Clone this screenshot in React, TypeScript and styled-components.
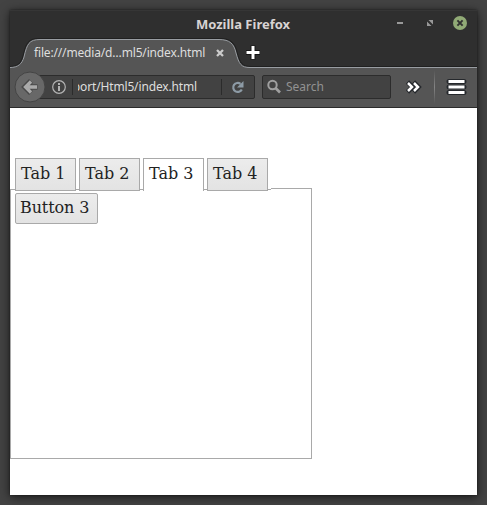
import React from "react";
import styled, { createGlobalStyle } from "styled-components";

const GlobalStyle = createGlobalStyle`
  *, *::before, *::after { box-sizing: border-box; }
  html, body { margin: 0; height: 100%; overflow: hidden; background: #434343; }
  svg { display: block; flex: none; }
`;

const Desktop = styled.div`
  height: 505px;
  padding: 10px;
  background: #434343;
`;

const Window = styled.main`
  display: flex;
  flex-direction: column;
  width: 467px;
  height: 485px;
  background: #fff;
  font: 12px/16px "Noto Sans", sans-serif;
  box-shadow: 0 2px 10px rgba(0, 0, 0, 0.65), 0 0 2px #252525;
`;

const TitleBar = styled.header`
  display: grid;
  grid-template-columns: 1fr auto 1fr;
  align-items: center;
  height: 28px;
  background: #2f2f2f;
  border-top: 1px solid #363636;
`;

const Title = styled.h1`
  grid-column: 2;
  margin: -2px 1px 0 0;
  color: #d8d3d3;
  font-size: 13px;
  font-weight: 700;
  line-height: 18px;
`;

const WindowControls = styled.div`
  display: flex;
  justify-content: flex-end;
  padding-right: 2px;
  margin-top: -3px;
`;

const TabStrip = styled.nav`
  display: flex;
  height: 30px;
  background: #2f2f2f;
`;

const BrowserTab = styled.div`
  position: relative;
  display: flex;
  align-items: center;
  width: 236px;
  height: 30px;
  padding: 0 0 1px 24px;
  color: #dedede;
`;

const TabShape = styled.svg`
  position: absolute;
  left: 0;
  top: 0;
`;

const TabLabel = styled.span`
  position: relative;
  width: 182px;
  white-space: nowrap;
  letter-spacing: -0.16px;
`;

const TabClose = styled.svg`
  position: relative;
`;

const NewTab = styled.svg`
  position: relative;
`;

const Toolbar = styled.div`
  display: flex;
  align-items: center;
  height: 40px;
  padding: 0 0 2px 4px;
  background: #555;
  border-bottom: 1px solid #2b2b2b;
`;

const BackButton = styled.svg`
  position: relative;
  z-index: 1;
`;

const Field = styled.div<{ $width: number }>`
  display: flex;
  align-items: center;
  width: ${(p) => p.$width}px;
  height: 24px;
  background: #424242;
  border: 1px solid #2c2c2c;
  border-radius: 2px;
  color: #dedede;
`;

const AddressField = styled(Field)`
  margin-left: -8px;
  padding-left: 13px;
`;

const SearchField = styled(Field)`
  margin-left: 7px;
  padding-left: 4px;
  gap: 4px;
  color: #929292;
`;

const Divider = styled.span<{ $tall?: boolean }>`
  width: 1px;
  height: ${(p) => (p.$tall ? 34 : 16)}px;
  background: ${(p) => (p.$tall ? "linear-gradient(#555, #858585 50%, #555)" : "#2b2b2b")};
`;

const AddressDivider = styled(Divider)`
  margin-left: 6px;
`;

const Address = styled.div`
  display: flex;
  justify-content: flex-end;
  width: 119px;
  margin-left: 5px;
  margin-right: 24px;
  overflow: hidden;
  white-space: nowrap;
  letter-spacing: -0.15px;
`;

const Page = styled.section`
  flex: 1;
  padding-top: 50px;
  color: #222;
  font: 16px/19px "DejaVu Serif", serif;
`;

const PageTabs = styled.div`
  position: relative;
  z-index: 1;
  display: flex;
  height: 33px;
  width: 261px;
`;

const Gap = styled.span<{ $width: number }>`
  width: ${(p) => p.$width}px;
  height: 32px;
  background: #fff;
  border-bottom: 1px solid #a9a9a9;
`;

const PageTab = styled.div<{ $active?: boolean }>`
  width: 61px;
  height: 33px;
  padding: 5px 0 0 5px;
  border: 1px solid #a9a9a9;
  border-bottom-width: ${(p) => (p.$active ? 0 : 1)}px;
  background: ${(p) => (p.$active ? "#fff" : "linear-gradient(#ececec, #e3e3e3)")};
  white-space: nowrap;
`;

const Panel = styled.div`
  width: 302px;
  height: 271px;
  margin-top: -3px;
  padding: 4px;
  border: 1px solid #a9a9a9;
`;

const PageButton = styled.button`
  display: block;
  width: 83px;
  height: 31px;
  padding: 0 0 3px 4px;
  border: 1px solid #a9a9a9;
  border-radius: 2px;
  background: linear-gradient(#ececec, #e3e3e3);
  color: #222;
  font: inherit;
  letter-spacing: -0.1px;
  text-align: left;
  white-space: nowrap;
`;

const Minimize = () => (
  <svg width="30" height="16"><path d="M12 8h6" stroke="#999" strokeWidth="2" /></svg>
);
const Restore = () => (
  <svg width="30" height="16"><path d="M13.5 5H18v4.500zM12 6.500V11h4.500z" fill="#999" /></svg>
);
const Close = () => (
  <svg width="30" height="16">
    <circle cx="15" cy="8" r="7" fill="#91aa76" />
    <path d="m12.4 5.4 5.2 5.2m0-5.2-5.2 5.2" stroke="#303030" strokeWidth="1.9" />
  </svg>
);
const Reload = () => (
  <svg width="32" height="16">
    <path d="M19.8 10.4A4.500 4.500 0 1 1 18.500 4.900" fill="none" stroke="#8d9ba6" strokeWidth="2.2" />
    <path d="M21.500 2v6.500H15z" fill="#8d9ba6" />
  </svg>
);

const pageTabs = ["Tab 1", "Tab 2", "Tab 3", "Tab 4"];

export default function App() {
  return (
    <>
      <GlobalStyle />
      <Desktop>
        <Window>
          <TitleBar>
            <Title>Mozilla Firefox</Title>
            <WindowControls><Minimize /><Restore /><Close /></WindowControls>
          </TitleBar>
          <TabStrip>
            <BrowserTab>
              <TabShape width="467" height="30">
                <path d="M0 29.5C8 29.5 12 26 14 19C17 6 19 1.5 30 1.5H209C220 1.5 224 6 226 15C229 26 231 29.5 240 29.5H467V30H0Z" fill="#555" />
                <path d="M0 28.5C8 28.5 11 25 13 18C16 5 18 .5 29 .5H210C221 .5 225 5 227 14C230 25 232 28.5 241 28.5H467" fill="none" stroke="#202020" />
                <path d="M0 29.5C8 29.5 12 26 14 19C17 6 19 1.5 30 1.5H209C220 1.5 224 6 226 15C229 26 231 29.5 240 29.5H467" fill="none" stroke="#999da2" />
              </TabShape>
              <TabLabel>file:///media/d…ml5/index.html</TabLabel>
              <TabClose width="8" height="8"><path d="m1 1 6 6m0-6L1 7" stroke="#ccc" strokeWidth="2.3" /></TabClose>
            </BrowserTab>
            <NewTab width="15" height="30">
              <path d="M7 7.5v14M0 14.5h14" stroke="#161616" strokeWidth="5" />
              <path d="M7 8v13M.5 14.5h13" stroke="#fff" strokeWidth="3" />
            </NewTab>
          </TabStrip>
          <Toolbar>
            <BackButton width="32" height="32" viewBox="0 0 32 32">
              <circle cx="16" cy="16" r="15" fill="#686868" stroke="#444" />
              <path d="M23.5 16H11m6-6-6 6 6 6" fill="none" stroke="#484848" strokeWidth="5.5" />
              <path d="M23 16H11m6-5.5L11.5 16l5.5 5.5" fill="none" stroke="#aaa" strokeWidth="3.3" />
            </BackButton>
            <AddressField $width={217}>
              <svg width="14" height="14">
                <circle cx="7" cy="7" r="6.3" fill="none" stroke="#b4b4b4" strokeWidth="1.2" />
                <path d="M7 3v2M7 6v5" stroke="#b4b4b4" strokeWidth="2" />
              </svg>
              <AddressDivider />
              <Address>port/Html5/index.html</Address>
              <Divider />
              <Reload />
            </AddressField>
            <SearchField $width={129}>
              <svg width="15" height="16">
                <circle cx="5.5" cy="6" r="4.2" fill="none" stroke="#a0a0a0" strokeWidth="2" />
                <path d="m8.5 9 4.5 4.5" stroke="#a0a0a0" strokeWidth="2.6" />
              </svg>
              <span>Search</span>
            </SearchField>
            <svg width="43" height="24">
              <path d="m16.500 7 5 5-5 5m6-10 5 5-5 5" fill="none" stroke="#25282c" strokeWidth="4.6" />
              <path d="m17 8 4 4-4 4m6-8 4 4-4 4" fill="none" stroke="#fff" strokeWidth="2.5" />
            </svg>
            <Divider $tall />
            <svg width="33" height="24">
              <path d="M14 6.500h15M14 12h15M14 17.500h15" stroke="#25282c" strokeWidth="5" strokeLinecap="round" />
              <path d="M13.5 6.500h16M13.5 12h16M13.5 17.500h16" stroke="#fff" strokeWidth="3" />
            </svg>
          </Toolbar>
          <Page>
            <PageTabs>
              <Gap $width={5} />
              {pageTabs.map((label) => (
                <React.Fragment key={label}>
                  <PageTab $active={label === "Tab 3"}>{label}</PageTab>
                  <Gap $width={3} />
                </React.Fragment>
              ))}
            </PageTabs>
            <Panel><PageButton>Button 3</PageButton></Panel>
          </Page>
        </Window>
      </Desktop>
    </>
  );
}
